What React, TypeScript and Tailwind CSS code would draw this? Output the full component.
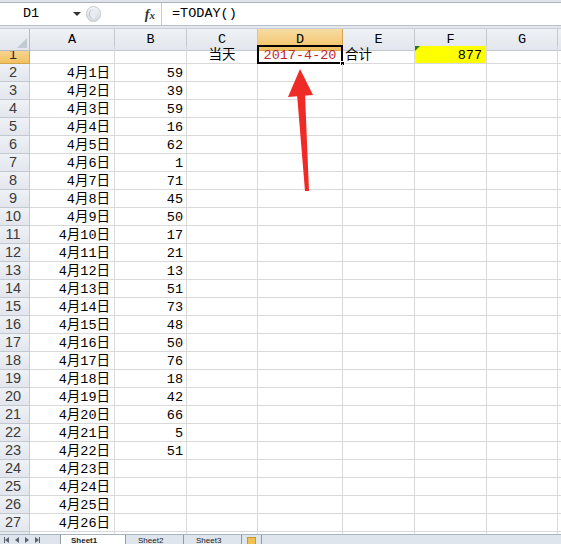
const COLS = ['A', 'B', 'C', 'D', 'E', 'F', 'G']
const B_VALUES = [59, 39, 59, 16, 62, 1, 71, 45, 50, 17, 21, 13, 51, 73, 48, 50, 76, 18, 42, 66, 5, 51]

const GRID = 'grid grid-cols-[30px_85px_72px_71px_85px_72px_72px_71px_1fr]'
const CELL = 'h-[18px] border-r border-b border-[#d9d9d9] flex items-end leading-[14px] overflow-visible whitespace-nowrap'
const TEXT = "font-['Liberation_Mono','Noto_Sans_CJK_SC',monospace] text-[13.5px] text-black"
const TRI_L = 'w-0 h-0 border-y-[3px] border-y-transparent border-r-[4px] border-r-[#5a6470]'
const TRI_R = 'w-0 h-0 border-y-[3px] border-y-transparent border-l-[4px] border-l-[#5a6470]'

function RowHeader({ n, active }: { n: number; active?: boolean }) {
  return (
    <div
      className={`h-[18px] border-r border-b flex items-center justify-center pr-[3px] pt-[1px] font-['Liberation_Sans',sans-serif] text-[14.5px] ${
        active
          ? 'bg-gradient-to-b from-[#f9dca3] to-[#f1c15f] border-[#d5a54e] text-[#2a2a2a]'
          : 'bg-gradient-to-b from-[#eef1f5] to-[#e3e7ed] border-[#c3c9d1] text-[#3b3b3b]'
      }`}
    >
      {n}
    </div>
  )
}

export default function App() {
  const rows = Array.from({ length: 27 }, (_, i) => i + 1)

  return (
    <div className="w-[561px] h-[544px] overflow-hidden bg-white flex flex-col relative">
      {/* formula bar */}
      <div className="h-[3px] shrink-0 bg-[#dfe4ea] border-b border-[#aab3be]" />
      <div className="h-[23px] shrink-0 flex items-center bg-white border-b border-[#b8c0ca]">
        <div className="w-[84px] h-full flex items-center relative">
          <span className={`${TEXT} w-[62px] text-center`}>D1</span>
          <div className="absolute left-[73px] top-[9px] w-0 h-0 border-x-[4px] border-x-transparent border-t-[4px] border-t-[#333]" />
        </div>
        <div className="w-[78px] h-full flex items-center border-r border-[#c3cad3]">
          <div className="ml-[2px] h-[16px] w-[15px] rounded-full bg-gradient-to-b from-[#f4f6f8] to-[#d4d9df] border border-[#c2c8d0] flex items-center pl-[2px]">
            <div className="w-[6px] h-[10px] rounded-l-full bg-[#e9ecf0] border-l border-[#b9c0c8]" />
          </div>
          <span className="ml-auto mr-[6px] font-['Liberation_Serif',serif] italic font-bold text-[14px] text-[#333]">
            f<span className="text-[11px]">x</span>
          </span>
        </div>
        <span className={`${TEXT} ml-[10px]`}>=TODAY()</span>
      </div>
      <div className="h-[3px] shrink-0 bg-[#e4e8ee] border-b border-[#c8ced6]" />

      {/* header row */}
      <div className={`${GRID} h-[17px] shrink-0`}>
        <div className="relative border-r border-b border-[#b5bcc6] bg-gradient-to-b from-[#eef1f5] to-[#e3e7ed]">
          <div className="absolute right-[2px] bottom-[2px] w-0 h-0 border-l-[10px] border-l-transparent border-b-[10px] border-b-[#c4cad2]" />
        </div>
        {COLS.map((c) => (
          <div
            key={c}
            className={`border-r border-b flex items-center justify-center pt-[1px] ${TEXT} ${
              c === 'D'
                ? 'bg-gradient-to-b from-[#f9dca3] to-[#f1c15f] border-[#d5a54e]'
                : 'bg-gradient-to-b from-[#eef1f5] to-[#e3e7ed] border-[#c3c9d1] text-[#333]'
            }`}
          >
            {c}
          </div>
        ))}
        <div className="border-b border-[#c3c9d1] bg-gradient-to-b from-[#eef1f5] to-[#e3e7ed]" />
      </div>

      {/* grid rows */}
      {rows.map((n) => {
        const bVal = n >= 2 ? B_VALUES[n - 2] : undefined
        return (
          <div key={n} className={`${GRID} shrink-0`}>
            <RowHeader n={n} active={n === 1} />
            <div className={`${CELL} ${TEXT} justify-end pr-[4px]`}>{n >= 2 ? `4月${n - 1}日` : ''}</div>
            <div className={`${CELL} ${TEXT} justify-end pr-[3px]`}>{bVal ?? ''}</div>
            <div className={`${CELL} ${TEXT} justify-center`}>{n === 1 ? '当天' : ''}</div>
            <div className={`${CELL} ${TEXT} justify-center relative`}>
              {n === 1 && (
                <>
                  <span className="text-[#c0282b]">2017-4-20</span>
                  <div className="absolute -left-[1px] -top-[1px] right-[-1px] bottom-[-1px] border-2 border-black" />
                  <div className="absolute right-[-3px] bottom-[-3px] w-[5px] h-[5px] bg-black border border-white" />
                </>
              )}
            </div>
            <div className={`${CELL} ${TEXT} pl-[2px]`}>{n === 1 ? '合计' : ''}</div>
            <div className={`${CELL} ${TEXT} justify-end pr-[4px] relative ${n === 1 ? 'bg-[#ffff00]' : ''}`}>
              {n === 1 && (
                <>
                  <div className="absolute left-0 top-0 w-0 h-0 border-t-[5px] border-t-[#1f7a1f] border-r-[5px] border-r-transparent" />
                  877
                </>
              )}
            </div>
            <div className={CELL} />
            <div className="h-[18px] border-b border-[#d9d9d9]" />
          </div>
        )
      })}
      <div className={`${GRID} h-[2px] shrink-0`}>
        <div className="border-r border-[#c3c9d1] bg-[#e6eaef]" />
        <div className="border-r border-[#d9d9d9]" />
        <div className="border-r border-[#d9d9d9]" />
        <div className="border-r border-[#d9d9d9]" />
        <div className="border-r border-[#d9d9d9]" />
        <div className="border-r border-[#d9d9d9]" />
        <div className="border-r border-[#d9d9d9]" />
        <div className="border-r border-[#d9d9d9]" />
        <div />
      </div>

      {/* sheet tabs */}
      <div className="flex-1 bg-[#dfe5ec] border-t border-[#a9b4c2] flex overflow-hidden">
        <div className="w-[60px] flex items-start gap-[6px] pl-[4px] pt-[2px]">
          <div className="flex items-center">
            <div className="w-[1px] h-[6px] bg-[#5a6470]" />
            <div className={TRI_L} />
          </div>
          <div className={TRI_L} />
          <div className={TRI_R} />
          <div className="flex items-center">
            <div className={TRI_R} />
            <div className="w-[1px] h-[6px] bg-[#5a6470]" />
          </div>
        </div>
        <div className="w-[66px] bg-white border-x border-[#8f9bab] pl-[10px] pt-[1px] font-['Liberation_Sans',sans-serif] font-bold text-[8px] leading-[9px] text-[#222]">
          Sheet1
        </div>
        <div className="w-[58px] border-r border-[#8f9bab] pl-[12px] pt-[1px] font-['Liberation_Sans',sans-serif] text-[8px] leading-[9px] text-[#222]">
          Sheet2
        </div>
        <div className="w-[58px] border-r border-[#8f9bab] pl-[12px] pt-[1px] font-['Liberation_Sans',sans-serif] text-[8px] leading-[9px] text-[#222]">
          Sheet3
        </div>
        <div className="w-[20px] border-r border-[#8f9bab] flex justify-center">
          <div className="mt-[2px] w-[9px] h-[8px] bg-[#f2c14e] border border-[#c99a2e]" />
        </div>
      </div>

      {/* red arrow annotation */}
      <svg className="absolute left-0 top-0 pointer-events-none" width="561" height="544">
        <polygon points="300,69 288,97 313,95" fill="#ee2b26" />
        <polygon points="297,94 305,94 309,191 305,191" fill="#ee2b26" />
      </svg>
    </div>
  )
}
